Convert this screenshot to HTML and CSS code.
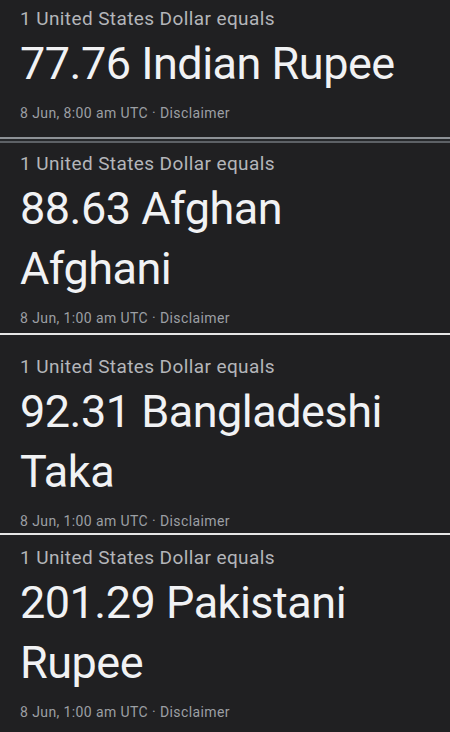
FILE: index.html
```html
<!doctype html>
<html lang=en>
  <head>
    <meta charset=utf-8 />
    <title>Currency</title>
    <link rel="stylesheet" href="styles.css">
  </head>
  <body>
    <div class="card card-first">
      <div class="label">1 United States Dollar equals</div>
      <div class="amount">77.76 Indian Rupee</div>
      <div class="meta">8 Jun, 8:00 am UTC · Disclaimer</div>
    </div>
    <div class="rule rule-grey"></div>
    <div class="card card-second">
      <div class="label">1 United States Dollar equals</div>
      <div class="amount">88.63 Afghan Afghani</div>
      <div class="meta">8 Jun, 1:00 am UTC · Disclaimer</div>
    </div>
    <div class="rule"></div>
    <div class="card card-third">
      <div class="label">1 United States Dollar equals</div>
      <div class="amount">92.31 Bangladeshi Taka</div>
      <div class="meta">8 Jun, 1:00 am UTC · Disclaimer</div>
    </div>
    <div class="rule"></div>
    <div class="card card-fourth">
      <div class="label">1 United States Dollar equals</div>
      <div class="amount">201.29 Pakistani Rupee</div>
      <div class="meta">8 Jun, 1:00 am UTC · Disclaimer</div>
    </div>
  </body>
</html>
```

FILE: styles.css
```css
body {
  background: #202022;
  font-family: Roboto, 'Noto Sans', sans-serif;
  margin: 0;
  padding: 0;
  overflow: hidden;
  height: 732px;
}

.card {
  padding: 0 20px;
}

.card-first { padding-top: 7px; padding-bottom: 14px; }
.card-second { padding-top: 9px; padding-bottom: 5px; }
.card-third { padding-top: 20px; padding-bottom: 2px; }
.card-fourth { padding-top: 11px; }

.label {
  color: #b4b6ba;
  font-size: 19px;
  letter-spacing: 0.4px;
  line-height: 24px;
}

.amount {
  color: #f1f2f4;
  font-size: 45px;
  letter-spacing: -0.5px;
  line-height: 60px;
  margin-top: 3px;
}

.meta {
  color: #9c9fa4;
  font-size: 14px;
  letter-spacing: 0.4px;
  line-height: 20px;
  margin-top: 9px;
}

.rule {
  background: #e6e6e6;
  height: 2px;
}

.rule-grey {
  background: #8d9196;
  border-bottom: 2px solid #26282b;
  box-shadow: 0 2px 0 #5d6166;
  height: 2px;
  margin-bottom: 2px;
}
```
